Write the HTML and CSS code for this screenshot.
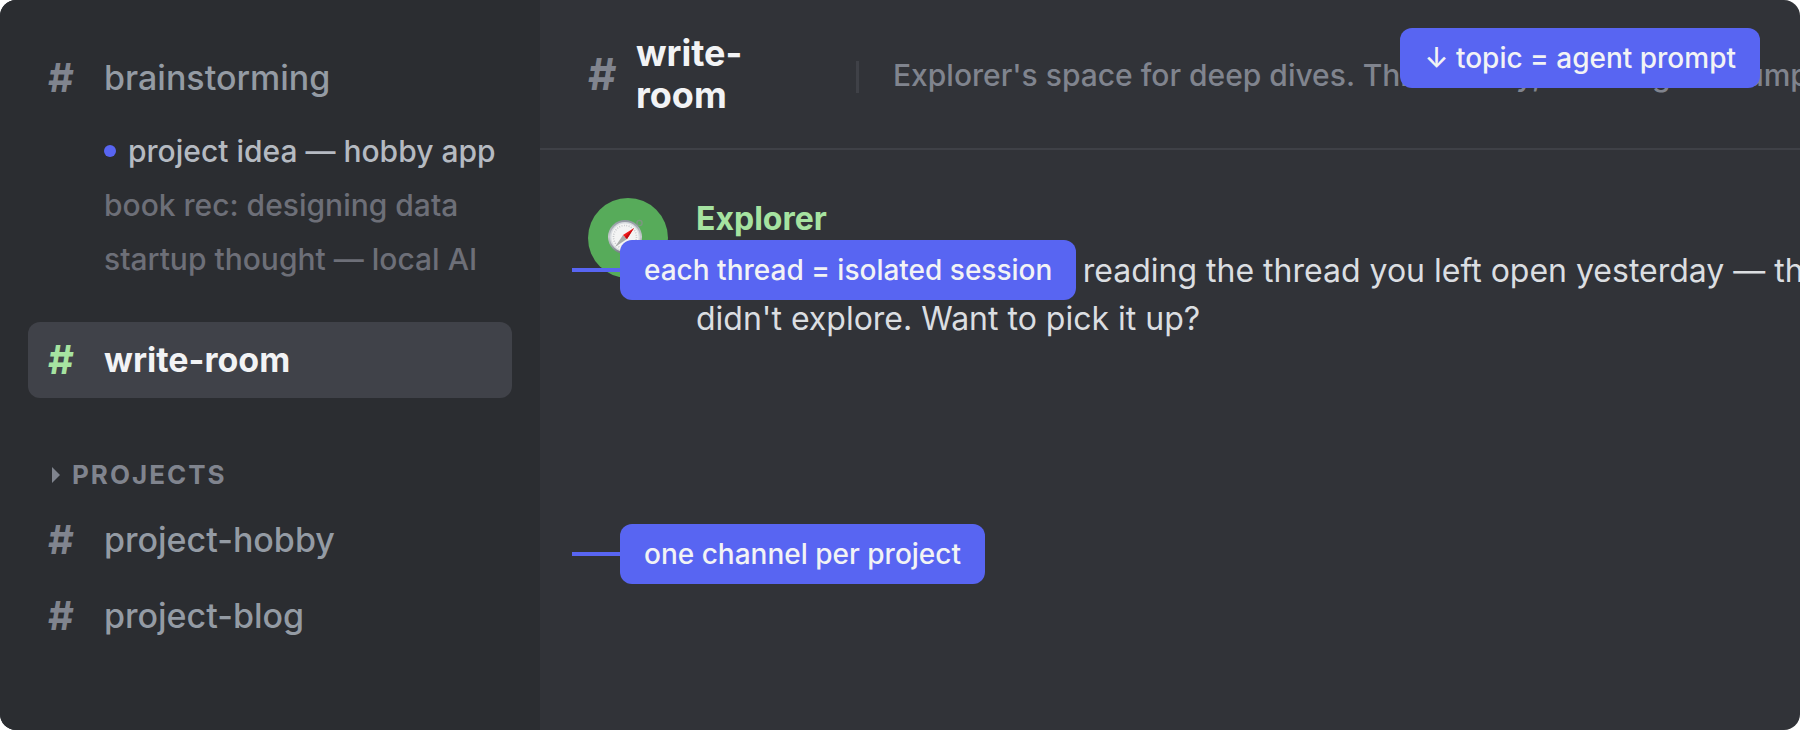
FILE: index.html
```html
<!DOCTYPE html>
<html lang="en">
<head>
    <meta charset="UTF-8">
    <meta name="viewport" content="width=device-width, initial-scale=1.0">
    <title>write-room</title>
    <link rel="stylesheet" href="styles.css">
</head>
<body>
    <div class="app">
        <nav class="sidebar">
            <a class="channel" href="#"><span class="hash">#</span>brainstorming</a>
            <div class="threads">
                <a class="thread unread" href="#">project idea — hobby app</a>
                <a class="thread" href="#">book rec: designing data</a>
                <a class="thread" href="#">startup thought — local AI</a>
            </div>
            <a class="channel active" href="#"><span class="hash">#</span>write-room</a>
            <h2 class="category">Projects</h2>
            <a class="channel" href="#"><span class="hash">#</span>project-hobby</a>
            <a class="channel" href="#"><span class="hash">#</span>project-blog</a>
        </nav>

        <main class="main">
            <header class="header">
                <span class="header-hash">#</span>
                <h1 class="header-name">write-room</h1>
                <p class="topic">Explorer's space for deep dives. Think freely, challenge assumptions.</p>
            </header>
            <article class="message">
                <div class="avatar">
                    <svg width="40" height="40" viewBox="0 0 40 40" aria-hidden="true">
                        <defs>
                            <linearGradient id="rim" x1="0" y1="0" x2="0" y2="1">
                                <stop offset="0" stop-color="#8f969f"/>
                                <stop offset="0.5" stop-color="#c9cdd2"/>
                                <stop offset="1" stop-color="#747b85"/>
                            </linearGradient>
                        </defs>
                        <circle cx="31.5" cy="5" r="2.6" fill="none" stroke="#7d9681" stroke-width="1.4"/>
                        <circle cx="17" cy="19" r="17" fill="url(#rim)"/>
                        <circle cx="17" cy="19" r="15" fill="#d9dce0"/>
                        <circle cx="17" cy="19" r="13.6" fill="#f4f4f4"/>
                        <circle cx="17" cy="19" r="11.5" fill="none" stroke="#c2c4c8" stroke-width="1.6" stroke-dasharray="0.8 1.6"/>
                        <path d="M15 17 L19 21 L7 29 Z" fill="#a9aca9"/>
                        <path d="M26 10 L15 17 L19 21 Z" fill="#f01818"/>
                        <path d="M26 10 L17 19 L19 21 Z" fill="#c40d12"/>
                    </svg>
                </div>
                <div class="message-body">
                    <h3 class="author">Explorer</h3>
                    <p class="text">Good evening. I was also reading the thread you left open yesterday — there's one angle we<br>didn't explore. Want to pick it up?</p>
                </div>
            </article>
        </main>

        <div class="note note-topic">↓ topic = agent prompt</div>
        <div class="note note-thread">each thread = isolated session</div>
        <div class="note note-project">one channel per project</div>
    </div>
</body>
</html>
```
FILE: styles.css
```css
* {
    margin: 0;
    padding: 0;
    box-sizing: border-box;
}
body {
    font-family: Inter, "Liberation Sans", sans-serif;
    background-color: #fff;
    color: #dbdee1;
    -webkit-font-smoothing: antialiased;
}
a {
    color: inherit;
    text-decoration: none;
}
.app {
    position: relative;
    display: flex;
    min-height: 100vh;
    background-color: #313338;
    border-radius: 16px;
    overflow: hidden;
}

/* sidebar */
.sidebar {
    flex: 0 0 540px;
    padding: 40px 28px;
    background-color: #2b2d31;
}
.channel {
    display: flex;
    align-items: center;
    height: 76px;
    padding: 0 20px 2px;
    border-radius: 12px;
    font-size: 34px;
    font-weight: 500;
    color: #949ba4;
}
.hash {
    width: 56px;
    font-size: 40px;
    font-weight: 700;
    color: #80848e;
}
.channel.active {
    background-color: #404249;
    color: #f2f3f5;
    font-weight: 700;
}
.channel.active .hash {
    color: #a6e3a1;
}
.threads {
    padding: 8px 0 36px 76px;
}
.thread {
    display: flex;
    align-items: center;
    height: 54px;
    font-size: 30px;
    font-weight: 500;
    color: #6d6f78;
    white-space: nowrap;
}
.thread.unread {
    color: #b5bac1;
}
.thread.unread::before {
    content: "";
    width: 12px;
    height: 12px;
    margin-right: 12px;
    border-radius: 50%;
    background-color: #5865f2;
}
.category {
    display: flex;
    align-items: center;
    gap: 12px;
    padding: 61px 24px 11px;
    font-size: 26px;
    line-height: 32px;
    font-weight: 700;
    letter-spacing: 2px;
    text-transform: uppercase;
    color: #80848e;
}
.category::before {
    content: "";
    border: 8px solid transparent;
    border-left-color: #80848e;
    border-right: 0;
}

/* main column */
.main {
    flex: 1;
    min-width: 0;
}
.header {
    display: flex;
    align-items: center;
    height: 150px;
    padding-left: 48px;
    border-bottom: 2px solid #3f4147;
    overflow: hidden;
}
.header-hash {
    flex: 0 0 48px;
    font-size: 44px;
    font-weight: 700;
    color: #80848e;
}
.header-name {
    flex: 0 0 184px;
    font-size: 36px;
    line-height: 42px;
    font-weight: 700;
    color: #f2f3f5;
}
.topic {
    display: flex;
    align-items: center;
    margin-left: 36px;
    padding-top: 2px;
    font-size: 30px;
    font-weight: 500;
    color: #80848e;
    white-space: nowrap;
}
.topic::before {
    content: "";
    width: 3px;
    height: 32px;
    margin-top: 4px;
    margin-right: 34px;
    background-color: #3f4147;
}
.message {
    display: flex;
    gap: 28px;
    padding: 48px;
    overflow: hidden;
}
.avatar {
    display: flex;
    flex: none;
    align-items: center;
    justify-content: center;
    width: 80px;
    height: 80px;
    border-radius: 50%;
    background-color: #57ab5a;
}
.author {
    font-size: 32px;
    line-height: 42px;
    font-weight: 700;
    color: #a6e3a1;
}
.text {
    margin-top: 7px;
    font-size: 32px;
    line-height: 48px;
    white-space: nowrap;
}

/* callouts laid over the app */
.note {
    position: absolute;
    padding: 0 24px;
    border-radius: 12px;
    background-color: #5865f2;
    color: #f2f3f5;
    font-size: 28px;
    line-height: 60px;
    font-weight: 500;
    white-space: nowrap;
}
.note-topic {
    top: 28px;
    right: 40px;
}
.note-thread {
    top: 240px;
    left: 620px;
}
.note-project {
    top: 524px;
    left: 620px;
}
.note-thread::before,
.note-project::before {
    content: "";
    position: absolute;
    top: 28px;
    right: 100%;
    width: 48px;
    height: 4px;
    background-color: #5865f2;
}
```
